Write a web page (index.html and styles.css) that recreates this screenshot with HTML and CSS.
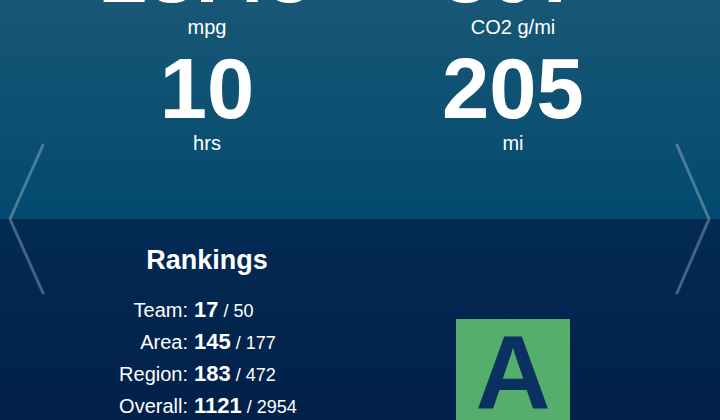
FILE: index.html
```html
<!DOCTYPE html>
<html lang="en">
<head>
  <meta charset="UTF-8" />
  <meta name="viewport" content="width=device-width, initial-scale=1" />
  <title>Trip Summary</title>
  <link rel="stylesheet" href="styles.css">
</head>
<body>
  <div class="screen">
    <section class="summary">
      <div class="stats">
        <div class="stat">
          <div class="value">28.45</div>
          <div class="unit">mpg</div>
        </div>
        <div class="stat">
          <div class="value">307</div>
          <div class="unit">CO2 g/mi</div>
        </div>
        <div class="stat">
          <div class="value">10</div>
          <div class="unit">hrs</div>
        </div>
        <div class="stat">
          <div class="value">205</div>
          <div class="unit">mi</div>
        </div>
      </div>
    </section>

    <section class="standing">
      <div class="rankings">
        <h2>Rankings</h2>
        <dl class="rank-list">
          <dt>Team:</dt><dd><b>17</b> / 50</dd>
          <dt>Area:</dt><dd><b>145</b> / 177</dd>
          <dt>Region:</dt><dd><b>183</b> / 472</dd>
          <dt>Overall:</dt><dd><b>1121</b> / 2954</dd>
        </dl>
      </div>
      <div class="grade-wrap">
        <div class="grade">A</div>
      </div>
    </section>

    <!-- paging arrows -->
    <svg class="pager pager-left" width="40" height="160" viewBox="0 0 40 160">
      <polyline points="35,5 2,79 35,153" />
    </svg>
    <svg class="pager pager-right" width="40" height="160" viewBox="0 0 40 160">
      <polyline points="5,5 37,79 5,153" />
    </svg>
  </div>
</body>
</html>
```

FILE: styles.css
```css
* {
  box-sizing: border-box;
}

html, body {
  margin: 0;
  padding: 0;
}

body {
  width: 720px;
  height: 420px;
  overflow: hidden;
  font-family: "Liberation Sans", Arial, Helvetica, sans-serif;
  color: #fff;
  background: #01214a;
}

.screen {
  position: relative;
  width: 720px;
  height: 420px;
  overflow: hidden;
}

/* top: trip numbers, scrolled part way up */
.summary {
  display: flow-root;
  height: 219px;
  background: linear-gradient(to bottom, #185775, #034a70);
}

.stats {
  display: grid;
  grid-template-columns: 1fr 1fr;
  padding: 0 54px;
  margin-top: -69px;
}

.stat {
  text-align: center;
  height: 116px;
}

.value {
  font-size: 85px;
  font-weight: bold;
  line-height: 84px;
}

.unit {
  font-size: 20px;
  line-height: 24px;
}

/* bottom: rankings and grade */
.standing {
  display: grid;
  grid-template-columns: 1fr 1fr;
  padding: 25px 54px 0;
  height: 201px;
  background: linear-gradient(to bottom, #032b53, #01204a);
}

.rankings h2 {
  margin: 0;
  font-size: 27px;
  line-height: 32px;
  text-align: center;
}

.rank-list {
  display: grid;
  grid-template-columns: 134px auto;
  grid-auto-rows: 32px;
  column-gap: 6px;
  align-items: baseline;
  margin: 18px 0 0;
}

.rank-list dt {
  font-size: 20px;
  line-height: 32px;
  text-align: right;
}

.rank-list dd {
  margin: 0;
  font-size: 18px;
  line-height: 32px;
  white-space: nowrap;
}

.rank-list b {
  font-size: 22px;
}

.grade-wrap {
  display: flex;
  justify-content: center;
  align-items: flex-start;
}

.grade {
  width: 114px;
  height: 114px;
  margin-top: 75px;
  background: #55ae6c;
  color: #0b3161;
  font-size: 104px;
  font-weight: bold;
  line-height: 106px;
  text-align: center;
}

.pager {
  position: absolute;
  top: 140px;
  fill: none;
  stroke: rgba(255, 255, 255, 0.27);
  stroke-width: 3;
  stroke-linecap: round;
  stroke-linejoin: round;
}

.pager-left {
  left: 8px;
}

.pager-right {
  left: 672px;
}
```
